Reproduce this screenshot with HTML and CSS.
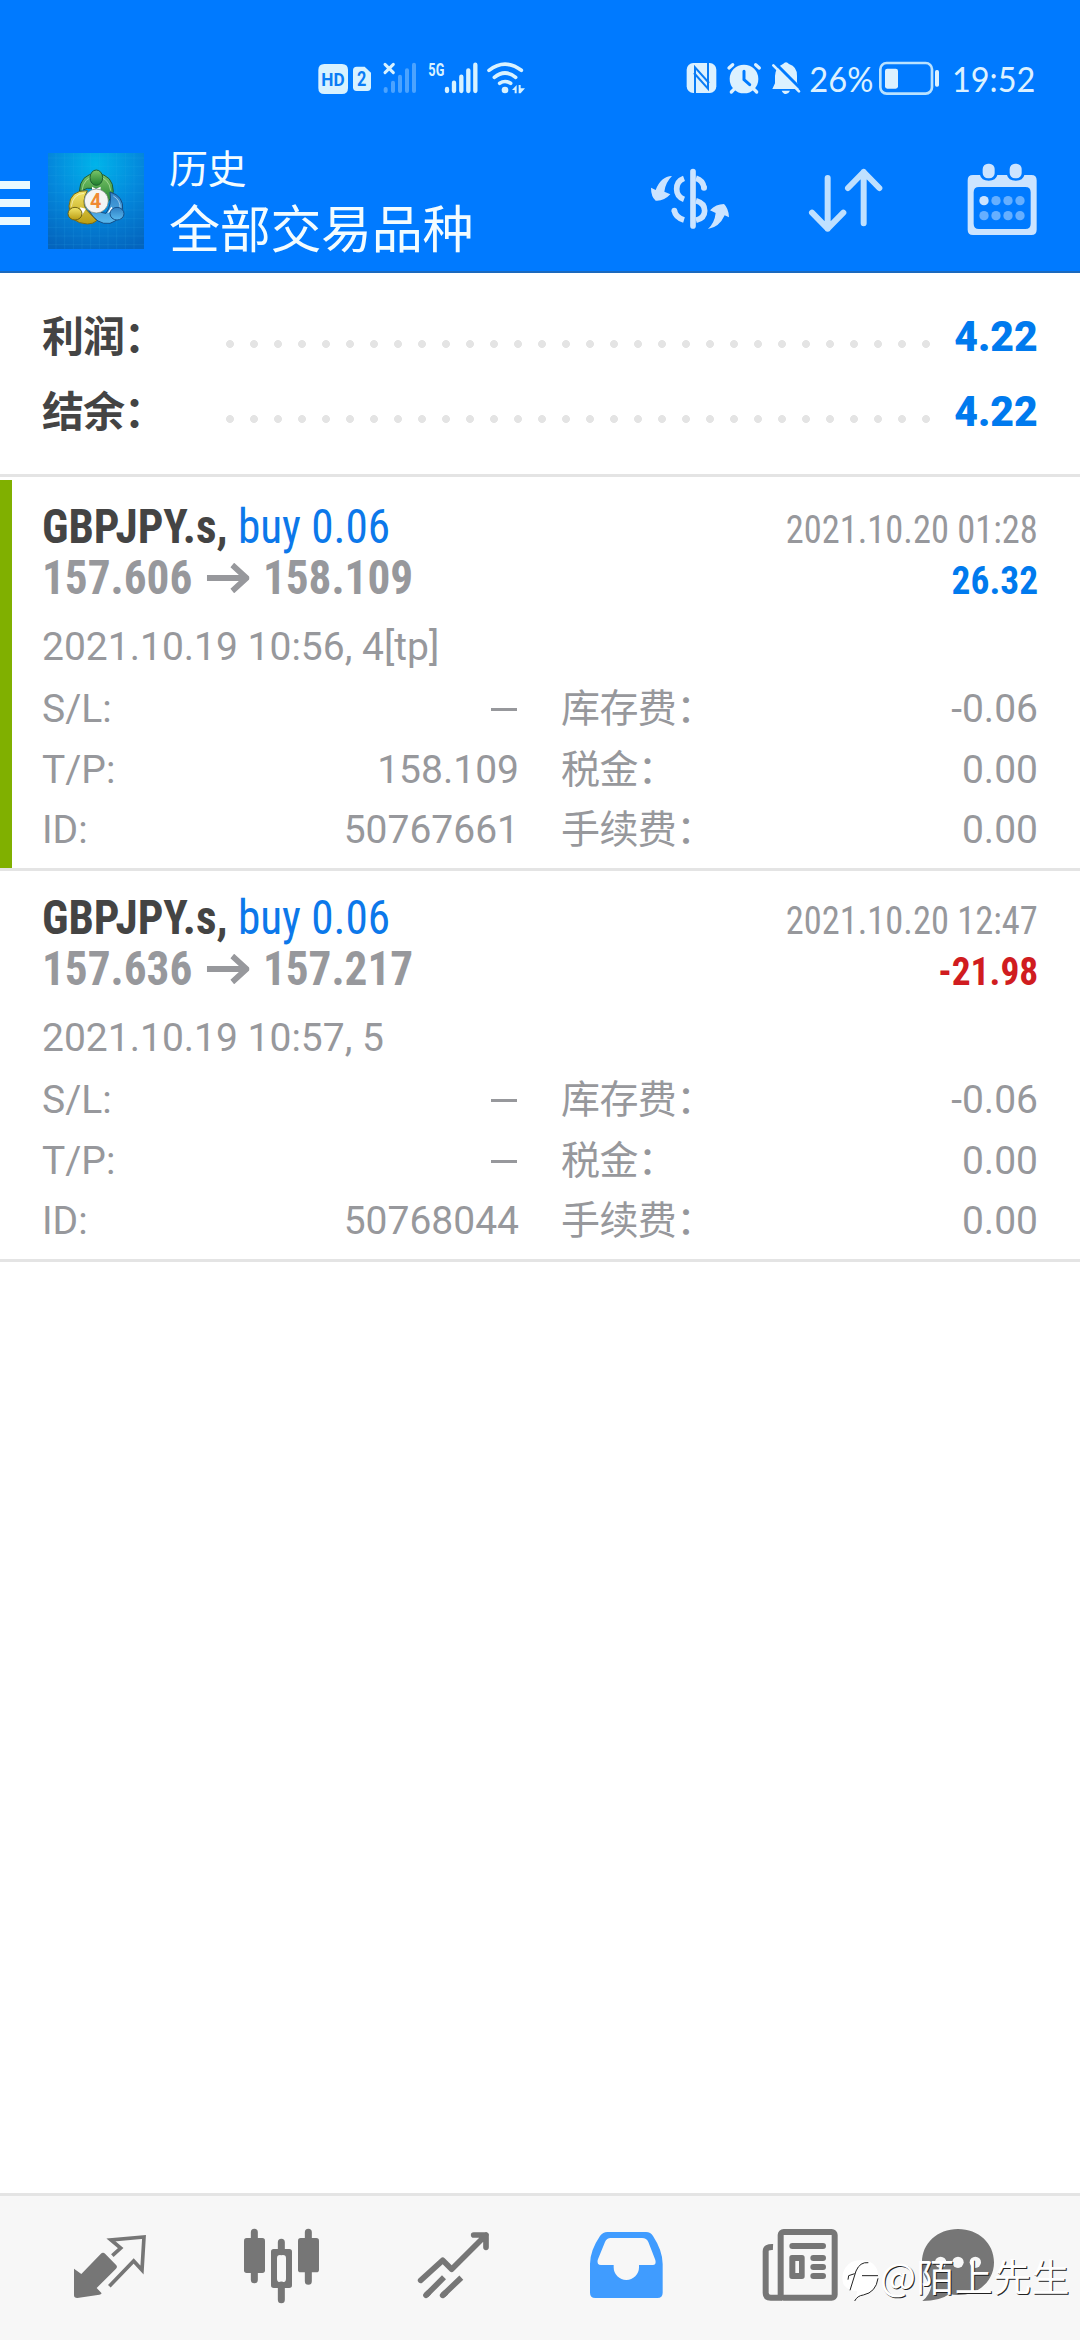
FILE: index.html
```html
<!DOCTYPE html>
<html lang="zh-CN">
<head>
<meta charset="utf-8">
<title>历史</title>
<link rel="stylesheet" href="styles.css">
</head>
<body>
<header class="header">
  <div class="status">
    <svg class="status-left" width="250" height="80" viewBox="0 0 750 240" fill="#d8f2ff">
      <path fill-rule="evenodd" d="M73 72H126Q144 72 144 90V144Q144 162 126 162H73Q55 162 55 144V90Q55 72 73 72Z"/>
      <text class="s-bold" x="64" y="138" font-size="54" textLength="70" lengthAdjust="spacingAndGlyphs" fill="#0a7cf5">HD</text>
      <path d="M170 80H194L213 98V142Q213 153 202 153H170Q159 153 159 142V91Q159 80 170 80Z"/>
      <text class="s-bold" x="171" y="139" font-size="60" textLength="28" lengthAdjust="spacingAndGlyphs" fill="#0a7cf5">2</text>
      <path d="M255 73L280 98M280 73L255 98" stroke="#d8f2ff" stroke-width="9" stroke-linecap="round"/>
      <g stroke="#4ba3ff" stroke-width="12" stroke-linecap="round"><path d="M257 147V153M279 128V153M300 110V153M321 91V153M342 74V153"/></g>
      <text class="s-bold" x="385" y="108" font-size="54" textLength="48" lengthAdjust="spacingAndGlyphs">5G</text>
      <g stroke="#d8f2ff" stroke-width="13" stroke-linecap="round"><path d="M441 147V153M462 128V153M484 110V153M505 91V153M526 74V153"/></g>
      <g fill="none" stroke="#d8f2ff" stroke-width="11" stroke-linecap="round"><path d="M567 91Q615 54 664 91M583 112Q615 86 647 112M599 130Q615 119 632 130"/></g>
      <circle cx="615" cy="150" r="10"/>
      <path d="M636 150L650 135V160H644V150ZM656 135H662V145H675L662 160H656Z"/>
    </svg>
    <svg class="status-right" width="390" height="80" viewBox="0 0 1170 240" fill="#dcf1ff">
      <rect x="50" y="69" width="89" height="90" rx="20"/>
      <path d="M75 159V82L117 129M114 69V146L72 99" fill="none" stroke="#0a7cf5" stroke-width="6"/>
      <circle cx="222" cy="117" r="43"/>
      <path d="M177 84L188 74M268 84L257 74M184 156L194 146M260 156L250 146" stroke="#dcf1ff" stroke-width="10" stroke-linecap="round"/>
      <path d="M222 94V119L239 134" fill="none" stroke="#007aff" stroke-width="9" stroke-linecap="round"/>
      <path d="M339 72Q348 62 357 72Q382 80 381 108V127L388 147H307L315 130V108Q316 82 339 72ZM335 152H360Q355 162 348 162Q340 162 335 152Z"/>
      <path d="M313 67L399 153" stroke="#007aff" stroke-width="9"/>
      <path d="M310 76L387 154" stroke="#dcf1ff" stroke-width="8" stroke-linecap="round"/>
      <text class="s-text" x="418" y="156" font-size="105" textLength="192" lengthAdjust="spacingAndGlyphs">26%</text>
      <rect x="631" y="69" width="155" height="92" rx="19" fill="none" stroke="#b9e2ff" stroke-width="8"/>
      <rect x="645" y="86" width="39" height="60" rx="7"/>
      <rect x="795" y="90" width="12" height="50" rx="5"/>
      <text class="s-text" x="846" y="156" font-size="105" textLength="250" lengthAdjust="spacingAndGlyphs">19:52</text>
    </svg>
  </div>
  <div class="toolbar">
    <div class="menu"><i></i><i></i><i></i></div>
    <svg class="logo" width="96" height="96" viewBox="144 69 288 288">
      <defs>
        <radialGradient id="sky" cx=".5" cy=".12" r=".95"><stop offset="0" stop-color="#00b4ea"/><stop offset=".5" stop-color="#0488dc"/><stop offset="1" stop-color="#0464bd"/></radialGradient>
        <linearGradient id="gr" x2="0" y2="1"><stop offset="0" stop-color="#7cc66a"/><stop offset="1" stop-color="#1f7f2e"/></linearGradient>
        <linearGradient id="ye" x2="0" y2="1"><stop offset="0" stop-color="#f3e66a"/><stop offset="1" stop-color="#b99c12"/></linearGradient>
        <linearGradient id="bl" x2="0" y2="1"><stop offset="0" stop-color="#2f7fc4"/><stop offset="1" stop-color="#58b8ee"/></linearGradient>
      </defs>
      <rect x="144" y="69" width="288" height="288" fill="url(#sky)"/>
      <path d="M168 69V357M194 69V357M220 69V357M246 69V357M272 69V357M298 69V357M324 69V357M350 69V357M376 69V357M402 69V357M144 84H432M144 110H432M144 136H432M144 162H432M144 188H432M144 214H432M144 240H432M144 266H432M144 292H432M144 318H432M144 344H432" stroke="#3ab4ee" stroke-opacity=".28" stroke-width="1.5"/>
      <path d="M238 185Q240 132 290 130Q340 135 340 185Q336 205 318 222L300 175H262Z" fill="url(#gr)" stroke="#1a5c39" stroke-width="3"/>
      <path d="M330 186Q372 198 368 240Q364 268 330 280Q290 286 266 240L318 250Q336 225 330 186Z" fill="url(#bl)" stroke="#134d86" stroke-width="3"/>
      <path d="M262 182Q210 180 207 228Q208 280 262 282Q280 282 290 272L258 238Q244 215 262 182Z" fill="url(#ye)" stroke="#7c6a10" stroke-width="3"/>
      <path d="M246 182Q250 142 289 138Q328 144 332 182" fill="none" stroke="#b6e2a6" stroke-opacity=".7" stroke-width="3"/>
      <path d="M340 198Q362 210 360 236M214 230Q218 192 252 190" fill="none" stroke="#fff" stroke-opacity=".5" stroke-width="3"/>
      <path d="M276 170L288 176L302 170V182H276ZM240 232L258 236L246 256ZM322 250L334 230L342 240Z" fill="#fff"/>
      <ellipse cx="289" cy="143" rx="19" ry="23" fill="url(#gr)" stroke="#1d5f30" stroke-width="3"/>
      <ellipse cx="225" cy="251" rx="21" ry="19" fill="url(#ye)" stroke="#6f6212" stroke-width="3"/>
      <ellipse cx="351" cy="251" rx="21" ry="19" fill="url(#bl)" stroke="#16518c" stroke-width="3"/>
      <circle cx="289" cy="213" r="36" fill="#f4f4f4" stroke="#6b7d77" stroke-width="2"/>
      <text class="s-bold" x="270" y="234" font-size="62" textLength="34" lengthAdjust="spacingAndGlyphs" fill="#f08a33">4</text>
    </svg>
    <div class="titles">
      <div class="title-small">历史</div>
      <div class="title-big">全部交易品种</div>
    </div>
    <div class="actions">
      <svg width="90" height="90" viewBox="75 42 270 270" fill="none" stroke="#cce4ff" stroke-width="17">
        <path d="M219 95V258" stroke-linecap="round"/>
        <path d="M192 115Q170 123 170 147Q170 170 192 178M163 211Q166 232 192 240M228 115Q248 121 252 143M228 182Q254 189 254 212Q254 234 228 241"/>
        <circle cx="163" cy="212" r="8.500" fill="#cce4ff" stroke="none"/><circle cx="252" cy="143" r="9" fill="#cce4ff" stroke="none"/>
        <path stroke="none" fill="#cce4ff" d="M156 108Q122 110 107 150L93 143Q93 170 107 182Q132 184 151 163L133 155Q136 128 156 108ZM264 267Q298 262 314 226L327 232Q326 205 312 192Q288 192 270 211L287 219Q284 248 264 267Z"/>
      </svg>
      <svg width="90" height="90" viewBox="544 42 270 270" fill="none" stroke="#bfe0ff" stroke-width="18" stroke-linecap="round" stroke-linejoin="round">
        <path d="M624 114V266M577 218L624 266L671 218M732 250V96M685 144L732 96L779 144"/>
      </svg>
      <svg width="90" height="90" viewBox="1012 42 270 270" fill="#cce4ff">
        <path fill-rule="evenodd" d="M1060 105H1081Q1085 122 1107 122Q1129 122 1133 105H1162Q1166 122 1188 122Q1210 122 1214 105H1235Q1251 105 1251 121V269Q1251 285 1235 285H1060Q1044 285 1044 269V121Q1044 105 1060 105ZM1078 141Q1062 141 1062 157V251Q1062 267 1078 267H1217Q1233 267 1233 251V157Q1233 141 1217 141Z"/>
        <rect x="1089" y="71" width="36" height="44" rx="16"/><rect x="1170" y="71" width="36" height="44" rx="16"/>
        <circle cx="1093" cy="182" r="14"/>
        <g fill="#66afff"><circle cx="1129" cy="182" r="14"/><circle cx="1165" cy="182" r="14"/><circle cx="1201" cy="182" r="14"/><circle cx="1093" cy="227" r="14"/><circle cx="1129" cy="227" r="14"/><circle cx="1165" cy="227" r="14"/><circle cx="1201" cy="227" r="14"/></g>
      </svg>
    </div>
  </div>
</header>
<main class="content">
  <section class="summary">
    <div class="sum-row"><span>利润：</span><i class="dots"></i><b>4.22</b></div>
    <div class="sum-row"><span>结余：</span><i class="dots"></i><b>4.22</b></div>
  </section>
  <section class="deals">
    <article class="deal deal-tp">
      <div class="line"><div class="cond name"><b>GBPJPY.s,</b> <span>buy 0.06</span></div><div class="cond date">2021.10.20 01:28</div></div>
      <div class="line line-price"><div class="cond price"><span>157.606</span><svg class="arrow" width="45" height="30" viewBox="0 0 45 30"><path d="M0 15H41M27 2L42 15L27 28"/></svg><span>158.109</span></div><div class="cond profit">26.32</div></div>
      <div class="opened">2021.10.19 10:56, 4[tp]</div>
      <div class="details">
        <span>S/L:</span><span><i class="dash"></i></span><span>库存费：</span><span>-0.06</span>
        <span>T/P:</span><span>158.109</span><span>税金：</span><span>0.00</span>
        <span>ID:</span><span>50767661</span><span>手续费：</span><span>0.00</span>
      </div>
    </article>
    <article class="deal">
      <div class="line"><div class="cond name"><b>GBPJPY.s,</b> <span>buy 0.06</span></div><div class="cond date">2021.10.20 12:47</div></div>
      <div class="line line-price"><div class="cond price"><span>157.636</span><svg class="arrow" width="45" height="30" viewBox="0 0 45 30"><path d="M0 15H41M27 2L42 15L27 28"/></svg><span>157.217</span></div><div class="cond profit loss">-21.98</div></div>
      <div class="opened">2021.10.19 10:57, 5</div>
      <div class="details">
        <span>S/L:</span><span><i class="dash"></i></span><span>库存费：</span><span>-0.06</span>
        <span>T/P:</span><span><i class="dash"></i></span><span>税金：</span><span>0.00</span>
        <span>ID:</span><span>50768044</span><span>手续费：</span><span>0.00</span>
      </div>
    </article>
  </section>
</main>
<nav class="tabs">
  <svg viewBox="186 120 288 288"><path d="M222 266L244 282L302 222Q309 215 316 222L349 256Q353 261 348 266L290 324L305 340Q303 344 298 344L232 354Q222 354 222 346Z"/><path fill="none" stroke="#767676" stroke-width="11" stroke-linejoin="miter" d="M337 227L362 204L333 180L432 171L426 270L401 243L328 319"/></svg>
  <svg viewBox="702 120 288 288"><path d="M763 157V299M925 157V304M844 187V215M844 315V359" stroke="#767676" stroke-width="21" stroke-linecap="round"/><rect x="732" y="174" width="63" height="105" rx="8"/><rect x="894" y="174" width="63" height="103" rx="8"/><path fill-rule="evenodd" d="M821 207H868Q876 207 876 215V316Q876 324 868 324H821Q813 324 813 316V215Q813 207 821 207ZM840 225Q831 225 831 235V296Q831 306 840 306H849Q858 306 858 296V235Q858 225 849 225Z"/></svg>
  <svg viewBox="138 120 288 288"><g fill="none" stroke="#767676" stroke-width="17" stroke-linecap="round" stroke-linejoin="round"><path d="M182 301L248 241L275 268L378 165M341 165H378V202"/><path d="M198 346L205 339M248 346L256 339"/></g><path d="M198 346L252 292M248 346L304 293" fill="none" stroke="#767676" stroke-width="17"/></svg>
  <svg viewBox="654 120 288 288"><path fill="#409cff" d="M742 156H858Q872 156 879 168Q908 212 908 252V338Q908 354 892 354H706Q690 354 690 338V252Q690 212 720 168Q729 156 742 156Z"/><path fill="#f7f7f7" d="M752 174H846Q860 174 865 186L886 240Q890 255 878 255H837V262A38 38 0 0 1 761 262V255H723Q710 255 713 240L735 186Q740 174 752 174Z"/></svg>
  <svg viewBox="90 120 288 288"><g fill="none" stroke="#767676" stroke-width="18"><rect x="182" y="156" width="162" height="197" rx="9"/><path d="M159 201Q137 200 137 214V338Q137 353 152 353H186"/><path d="M217 198H309M280 234H309M280 261H309M280 288H309" stroke-linecap="round"/></g><path fill-rule="evenodd" d="M216 225H246Q254 225 254 233V289Q254 297 246 297H216Q208 297 208 289V233Q208 225 216 225ZM226 243V279H237V243Z"/></svg>
  <svg viewBox="606 120 288 288"><path d="M714 147C776 147 822 190 822 247C822 303 776 345 714 345Q700 345 688 342Q660 363 607 363Q630 345 634 317Q606 290 606 247C606 190 652 147 714 147Z"/><g fill="#f7f7f7"><circle cx="662" cy="247" r="17"/><circle cx="714" cy="247" r="17"/><circle cx="766" cy="247" r="17"/></g></svg>
</nav>
<div class="watermark">
  <svg width="38" height="44" viewBox="366 242 114 132"><path fill="#fff" d="M420 246C452 244 474 262 474 290C474 325 450 350 428 352Q410 355 404 370L412 338Q384 338 370 318Q362 290 376 268Q392 246 420 246Z"/><path fill="none" stroke="#222" stroke-width="3" d="M445 253Q420 250 408 278L390 336M426 292H474M474 300Q468 342 430 350Q412 352 404 368M384 304L386 292L404 286"/></svg>
  <span>@陌上先生</span>
</div>
</body>
</html>
```
FILE: styles.css
```css
* { box-sizing: border-box; }
html, body { margin: 0; padding: 0; }
body {
  position: relative;
  display: flex;
  flex-direction: column;
  width: 1080px;
  height: 2340px;
  overflow: hidden;
  background: #fff;
  font-family: Roboto, "Noto Sans CJK SC", sans-serif;
  color: #97989c;
}
svg { display: block; flex: none; }
.header { height: 273px; background: #007aff; border-bottom: 2px solid #1c69bd; }
.status { display: flex; height: 130px; padding: 40px 20px 0 300px; justify-content: space-between; }
.s-bold { font-family: Roboto, sans-serif; font-weight: 700; }
.s-text { font-family: Lato, sans-serif; font-weight: 400; }
.toolbar { display: flex; height: 141px; }
.menu { display: flex; flex-direction: column; gap: 10px; width: 48px; padding-top: 51px; }
.menu i { width: 30px; height: 8px; background: #eaf9ff; }
.logo { margin-top: 23px; }
.titles { margin-left: 25px; padding-top: 11px; color: #f3fcff; font-family: "Noto Sans CJK SC", sans-serif; white-space: nowrap; }
.title-small { font-size: 39px; line-height: 50px; letter-spacing: -.5px; }
.title-big { font-size: 51px; line-height: 70px; letter-spacing: -.3px; }
.actions { display: flex; gap: 66px; margin-left: auto; padding: 24px 33px 0 0; }
.summary { display: flex; flex-direction: column; height: 204px; padding: 26px 42px 0; border-bottom: 3px solid #e4e4e4; }
.sum-row { display: flex; height: 75px; line-height: 75px; font-size: 42px; font-weight: 700; color: #444; }
.sum-row span { width: 176px; padding-top: 1px; letter-spacing: -1px; white-space: nowrap; }
.sum-row b { margin-left: auto; color: #007aee; transform: scaleX(.975); transform-origin: right; }
.dots { width: 720px; height: 8px; margin-top: 41px; background: radial-gradient(circle at 12px 4px, #e4e4e4 3.600px, transparent 4.300px) 0 0 / 24px 8px repeat-x; }
.deals { padding-top: 3px; }
.deal { height: 391px; padding: 21px 42px 0; border-bottom: 3px solid #e4e4e4; }
.deal-tp { border-left: 12px solid #80b000; padding-left: 30px; border-bottom: 0; height: 388px; box-shadow: 0 3px #e4e4e4; margin-bottom: 3px; }
.line { display: flex; justify-content: space-between; height: 51px; align-items: baseline; line-height: 51px; }
.cond { font-family: "Roboto Condensed", Roboto, sans-serif; font-stretch: 75%; white-space: nowrap; transform: scaleX(.942); transform-origin: left; }
.name { font-size: 48px; color: #444; }
.name span { color: #0c78ea; }
.date { font-size: 39px; transform: scaleX(.934); transform-origin: right; }
.price { display: flex; align-items: center; gap: 15px; font-size: 48px; font-weight: 700; }
.arrow path { fill: none; stroke: #97989c; stroke-width: 6; }
.profit { font-size: 39px; font-weight: 700; color: #007aee; transform: scaleX(.96); transform-origin: right; }
.profit.loss { color: #d01c20; }
.opened { height: 76px; line-height: 70px; font-size: 39px; padding-top: 9px; }
.details { display: grid; grid-template-columns: 110px 367px 152px 367px; grid-auto-rows: 60.500px; line-height: 60px; font-size: 39px; white-space: nowrap; }
.details > :nth-child(even) { text-align: right; }
.details > :nth-child(4n+3) { padding-left: 42px; letter-spacing: -.6px; }
.dash { display: inline-block; width: 26px; height: 3px; margin: 0 2px 11px 0; background: #97989c; }
.tabs { display: grid; grid-template-columns: repeat(6, 172px); justify-items: center; height: 147px; margin-top: auto; padding: 24px 0 0 24px; background: #f7f7f7; border-top: 3px solid #e4e4e4; }
.tabs svg { width: 96px; height: 96px; fill: #767676; }
.watermark { position: absolute; left: 842px; top: 2247px; display: flex; align-items: center; height: 56px; font: 400 38px/56px "Noto Sans CJK SC", sans-serif; letter-spacing: .4px; color: #fff; text-shadow: 1px 1px 0 #222; white-space: nowrap; }
.watermark svg { margin-top: 12px; }
```
